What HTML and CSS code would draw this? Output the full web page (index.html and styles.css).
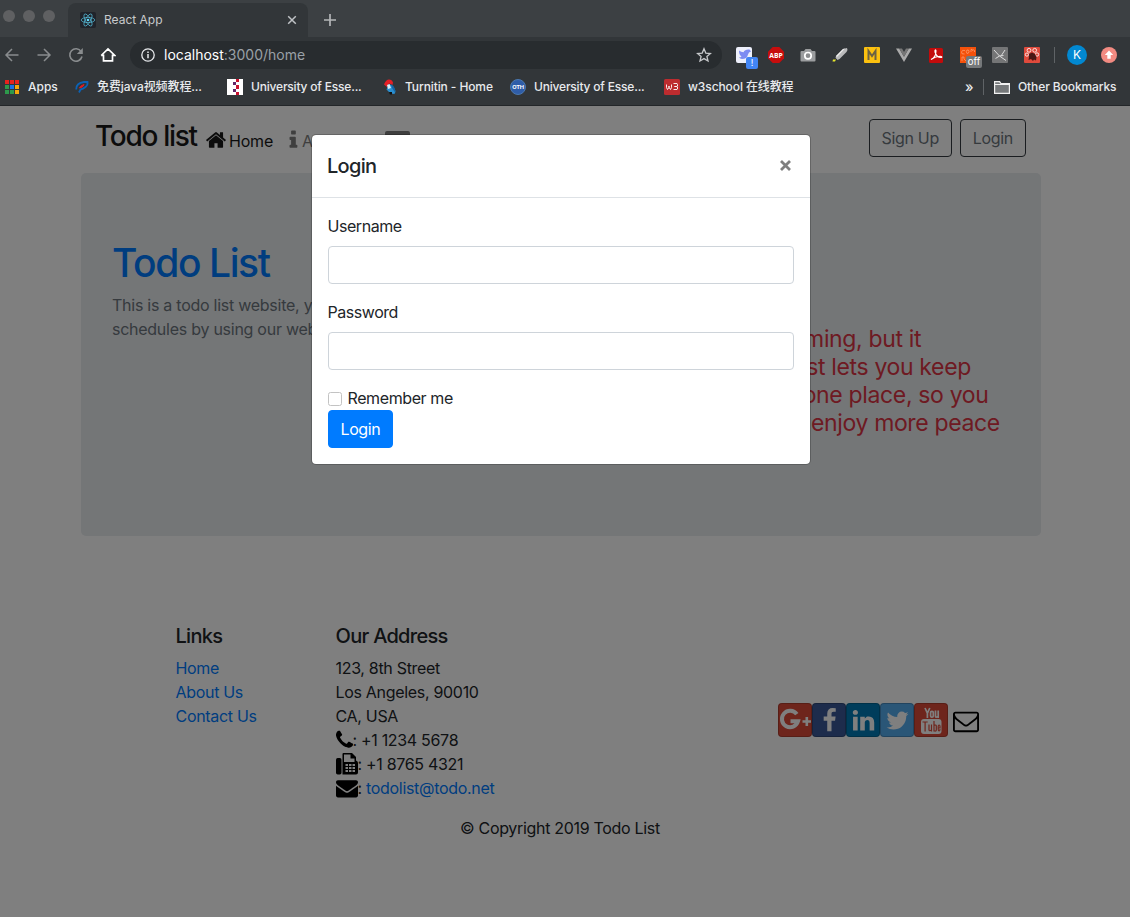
FILE: index.html
```html
<!DOCTYPE html>
<html lang="en">
<head>
<meta charset="utf-8">
<title>React App</title>
<link rel="stylesheet" href="styles.css">
</head>
<body>
<div class="browser">
  <div class="tabstrip">
    <div class="lights"><i></i><i></i><i></i></div>
    <div class="tab">
      <svg class="fav" width="16" height="16" viewBox="0 0 16 16"><rect width="16" height="16" rx="2" fill="#20232a"/><g fill="none" stroke="#61dafb" stroke-width=".7" opacity=".85"><ellipse cx="8" cy="8" rx="6.800" ry="2.600"/><ellipse cx="8" cy="8" rx="6.800" ry="2.600" transform="rotate(60 8 8)"/><ellipse cx="8" cy="8" rx="6.800" ry="2.600" transform="rotate(120 8 8)"/></g><circle cx="8" cy="8" r="1.300" fill="#61dafb"/></svg>
      <span class="tab-title">React App</span>
      <svg class="tab-close" width="10" height="10" viewBox="0 0 10 10"><path d="M1.200 1.200l7.600 7.600M8.800 1.200l-7.600 7.600" stroke="#bfc2c5" stroke-width="1.500"/></svg>
    </div>
    <svg class="newtab" width="12" height="12" viewBox="0 0 12 12"><path d="M6 0v12M0 6h12" stroke="#b4b6b8" stroke-width="1.700"/></svg>
  </div>
  <div class="toolbar">
    <svg class="nav-ico" width="16" height="16" viewBox="0 0 16 16"><path d="M14.500 8H2M8 2L2 8l6 6" fill="none" stroke="#898c8e" stroke-width="1.500"/></svg>
    <svg class="nav-ico" width="16" height="16" viewBox="0 0 16 16"><path d="M1.500 8H14M8 2l6 6-6 6" fill="none" stroke="#898c8e" stroke-width="1.500"/></svg>
    <svg class="nav-ico" width="16" height="16" viewBox="0 0 16 16"><path d="M13.200 4.600A6.200 6.200 0 1 0 14 9.500" fill="none" stroke="#898c8e" stroke-width="1.600"/><path d="M14.800 1v6h-6z" fill="#898c8e"/></svg>
    <svg class="nav-ico" width="16" height="16" viewBox="0 0 16 16"><path d="M3.500 7.500v6.300h9V7.500M1.200 8.500L8 2l6.800 6.500H12.500M1.200 8.500h2.300" fill="none" stroke="#fff" stroke-width="1.700"/></svg>
    <div class="omnibox">
      <svg width="14" height="14" viewBox="0 0 14 14"><circle cx="7" cy="7" r="6.200" fill="none" stroke="#e8eaed" stroke-width="1.300"/><path d="M7 6v4.300M7 3.500v1.500" stroke="#e8eaed" stroke-width="1.500"/></svg>
      <span class="url"><b>localhost</b>:3000/home</span>
      <svg class="star" width="16" height="16" viewBox="0 0 16 16"><path d="M8 1.800l1.800 4.300 4.600.4-3.500 3 1.100 4.500-4-2.400L4 14l1.100-4.500-3.500-3 4.600-.4z" fill="none" stroke="#c6c8ca" stroke-width="1.300"/></svg>
    </div>
    <div class="exts">
      <span class="ext"><svg width="16" height="16" viewBox="0 0 16 16"><rect width="16" height="16" rx="2" fill="#eef0fb"/><path d="M3 3.500q2 1.500 4.500 1.700Q9 2 13.500 2.500L15 4.500q-2.500.5-3 3Q11 12 6 12q-2-.3-3-1.700 2 0 2.500-.9Q3 8 3 3.500z" fill="#7d8cf2"/></svg><em class="badge blue">!</em></span>
      <span class="ext"><svg width="16" height="16" viewBox="0 0 16 16"><path d="M4.700 0h6.600L16 4.700v6.600L11.300 16H4.700L0 11.300V4.700z" fill="#c70d0d"/><text x="8" y="10.800" class="abp" textLength="13.500" lengthAdjust="spacingAndGlyphs">ABP</text></svg></span>
      <span class="ext"><svg width="16" height="16" viewBox="0 0 16 16"><path d="M1.500 4H4l1.500-2h5L12 4h2.500q1 0 1 1v8.500q0 1-1 1h-13q-1 0-1-1V5q0-1 1-1z" fill="#9b9d9f"/><circle cx="8" cy="8.700" r="3.200" fill="#8a8c8e" stroke="#fff" stroke-width="1.700"/></svg></span>
      <span class="ext"><svg width="16" height="16" viewBox="0 0 16 16"><path d="M4 9l7-7 4-1 .5 2-1 2-7 7-2 1-2-2z" fill="#b9babb"/><path d="M4 9l7-7 2-.5L5 10z" fill="#eee"/><path d="M3.500 11L5 13l-2 .5-1-1z" fill="#333"/><path d="M1 12.500h3l-1 2H.500z" fill="#e6e62e"/></svg></span>
      <span class="ext"><svg width="16" height="16" viewBox="0 0 16 16"><rect width="16" height="16" rx="1" fill="#fcc10f"/><path d="M4.500 13V4L8 9l3.500-5v9" fill="none" stroke="#6c6243" stroke-width="2"/></svg></span>
      <span class="ext"><svg width="16" height="16" viewBox="0 0 16 16"><path d="M0 1.500h3.200L8 9.800l4.800-8.300H16L8 15z" fill="#aaa"/><path d="M3.200 1.500H6l2 3.500 2-3.500h2.800L8 9.800z" fill="#777"/></svg></span>
      <span class="ext"><svg width="16" height="16" viewBox="0 0 16 16"><rect x="1" y="1" width="14" height="15" rx="1.500" fill="#c30b0b"/><path d="M3 12.500c3-1.500 5-5 5-8.500 0-2-1.500-1-1 1 .8 3 3 5.500 6 5.500 1.500 0 1-1.500-1.500-1.200-3 .2-5.500 1-8.500 3.200z" fill="none" stroke="#fff" stroke-width="1.100"/></svg></span>
      <span class="ext"><svg width="16" height="16" viewBox="0 0 16 16"><rect width="16" height="16" fill="#f4510b"/><path d="M5 3.500q-3-1-3.500 1.500t3 2M7 3q-1.500 1.500 0 3.500 2 0 2-2T7 3M11 5V2.500q1.500-1 1.500 1 1.800-1.500 2 0V5M2 14v-4q3-1 2 2l2 2" fill="none" stroke="#ffb08a" stroke-width=".6"/></svg><em class="badge gray">off</em></span>
      <span class="ext"><svg width="16" height="16" viewBox="0 0 16 16"><rect width="16" height="16" rx="1" fill="#747576"/><path d="M2 3l5.500 6L14 13.500M13 3l-4 6M3.500 11.500l4-2.500 4-.5" fill="none" stroke="#dcdcdc" stroke-width="1"/></svg></span>
      <span class="ext"><svg width="16" height="16" viewBox="0 0 16 16"><rect width="16" height="16" rx="1" fill="#df4a3c"/><g fill="none" stroke="#fff" stroke-width=".8"><circle cx="5" cy="3.300" r="1.900"/><circle cx="10.700" cy="3.300" r="1.900"/><circle cx="2.900" cy="7.600" r="1.600"/><circle cx="13" cy="7.500" r="1.700"/></g><path d="M5 7l3-1.500L11 7l1.500 3-.5 3.500-2-1L9 14l-2-2-2.500 1 .5-3z" fill="#4a1714"/></svg></span>
    </div>
    <i class="sep s1"></i>
    <span class="avatar">K</span>
    <svg class="upd" width="16" height="16" viewBox="0 0 16 16"><circle cx="8" cy="8" r="8" fill="#f28b82"/><path d="M8 3.600L3.800 8h2.500v3.800h3.400V8h2.500z" fill="#fff"/></svg>
  </div>
  <div class="bookmarks">
    <a class="bm apps"><svg width="14" height="14" viewBox="0 0 14 14"><path d="M0 0h4v4H0zM5 0h4v4H5zM10 0h4v4h-4z" fill="#e8221c"/><path d="M0 5h4v4H0zM0 10h4v4H0z" fill="#2d9a4b"/><path d="M5 5h4v4H5z" fill="#1a73e8"/><path d="M10 5h4v4h-4zM10 10h4v4h-4z" fill="#f4a70b"/><path d="M5 10h4v4H5z" fill="#2d9a4b"/></svg><span>Apps</span></a>
    <a class="bm java"><svg width="14" height="14" viewBox="0 0 14 14"><path d="M1.200 9.500Q1 3 9 2h3.500q.5 3-2 5T5.500 9.500L4 12.500" fill="none" stroke="#0b62b5" stroke-width="1.800"/><path d="M4.500 8q1-2.500 4.500-3.500-.5 2.500-4.500 3.500z" fill="#e31b23" stroke="#e31b23"/></svg><span>免费java视频教程...</span></a>
    <a class="bm essex"><svg width="16" height="16" viewBox="0 0 16 16"><path fill="#fff" d="M0 0h16v16H0z"/><path d="M9 0h3v3H9zM9 6h3v4H9zM9 13h3v3H9z" fill="#c8102e"/><path d="M6 3h3v3H6zM6 10h3v3H6z" fill="#622567"/></svg><span>University of Esse...</span></a>
    <a class="bm turn"><svg width="14" height="16" viewBox="0 0 14 16"><path d="M1 5.500Q3 .5 6 .5T10 3.500L9.500 6 6 4.500 4 8z" fill="#e41f26"/><path d="M6 5l4 2 2.500 5-1 3-4-.5-4-4z" fill="#2a8fd0"/><path d="M8 5q4.500 3 4.500 9L9 9z" fill="#1266a8"/><path d="M4 6l2.500-1 1.500 4-3 1z" fill="#d9ecf7"/><path d="M6 13h3v2.500H7z" fill="#111"/></svg><span>Turnitin - Home</span></a>
    <a class="bm oth"><svg width="16" height="16" viewBox="0 0 16 16"><circle cx="8" cy="8" r="7.500" fill="#2f5da8" stroke="#4b78ae"/><text x="8" y="10" class="otht" textLength="11.500" lengthAdjust="spacingAndGlyphs">OTH</text></svg><span>University of Esse...</span></a>
    <a class="bm w3"><svg width="16" height="16" viewBox="0 0 16 16"><rect width="16" height="16" rx="1.500" fill="#bd2c2f"/><path d="M2.500 5.500v3l1 2 1.500-2v-1.500 1.500l1.500 2 1-2v-3M9.500 4.500h3.500l.5 1v1.500l-1 .5h-2 2l1 .5v2l-.5.500H9.500" fill="none" stroke="#fff" stroke-width=".9"/></svg><span>w3school 在线教程</span></a>
    <span class="more">»</span>
    <i class="sep"></i>
    <a class="bm other"><svg width="16" height="13" viewBox="0 0 16 13"><path d="M.6 12.400V.6h5l1.400 2h8.400v9.800z" fill="#75787a" stroke="#f1f1f1" stroke-width="1.200"/><path d="M1 3.500h14" stroke="#f1f1f1"/></svg><span>Other Bookmarks</span></a>
  </div>
</div>

<div class="viewport">
  <div class="page">
    <nav class="navbar">
      <span class="brand">Todo list</span>
      <a class="nl on"><svg width="22" height="22" viewBox="0 0 1792 1792"><path d="M1472 992v480q0 26-19 45t-45 19h-384v-384h-256v384h-384q-26 0-45-19t-19-45v-480q0-1 .5-3t.5-3l575-474 575 474q1 2 1 6zm223-69l-62 74q-8 9-21 11h-3q-13 0-21-7l-692-577-692 577q-12 8-24 7-13-2-21-11l-62-74q-8-10-7-23.500t11-21.500l719-599q32-26 76-26t76 26l244 204v-195q0-14 9-23t23-9h192q14 0 23 9t9 23v408l219 182q10 8 11 21.500t-7 23.500z"/></svg><span>Home</span></a>
      <a class="nl info"><svg width="9" height="22" viewBox="540 0 720 1792"><path d="M1216 1344v128q0 26-19 45t-45 19h-512q-26 0-45-19t-19-45v-128q0-26 19-45t45-19h64v-384h-64q-26 0-45-19t-19-45v-128q0-26 19-45t45-19h384q26 0 45 19t19 45v576h64q26 0 45 19t19 45zm-128-1152v192q0 26-19 45t-45 19h-256q-26 0-45-19t-19-45v-192q0-26 19-45t45-19h256q26 0 45 19t19 45z"/></svg><span>About Us</span></a>
      <a class="nl card"><svg width="25" height="18" viewBox="0 0 25 18"><path d="M2 0h21q2 0 2 2v14q0 2-2 2H2q-2 0-2-2V2q0-2 2-2z"/><circle cx="8" cy="7" r="3" fill="#fff"/></svg><span>Contact Us</span></a>
      <div class="auth"><button class="ob">Sign Up</button><button class="ob">Login</button></div>
    </nav>
    <section class="jumbo">
      <div class="intro"><h1>Todo List</h1><p>This is a todo list website, you can manage your<br>schedules by using our website</p></div>
      <p class="pitch">Life can feel overwhelming, but it<br>doesn't have to. Todoist lets you keep<br>track of everything in one place, so you<br>can get it all done and enjoy more peace<br>of mind along the way.</p>
    </section>
    <footer class="foot">
      <div class="cols">
        <div class="links"><h5>Links</h5><a>Home</a><a>About Us</a><a>Contact Us</a></div>
        <address>
          <h5>Our Address</h5>
          <div>123, 8th Street</div><div>Los Angeles, 90010</div><div>CA, USA</div>
          <div class="row"><svg width="17" height="22" viewBox="192 0 1408 1792"><path d="M1600 1240q0 27-10 70.500t-21 68.500q-21 50-122 106-94 51-186 51-27 0-52.500-3.500t-57.500-12.500-47.500-14.500-55.500-20.500-49-18q-98-35-175-83-128-79-264.500-215.500t-215.500-264.500q-48-77-83-175-3-9-18-49t-20.500-55.500-14.500-47.500-12.500-57.500-3.500-52.500q0-92 51-186 56-101 106-122 25-11 68.500-21t70.500-10q14 0 21 3 18 6 53 76 11 19 30 54t35 63.500 31 53.500q3 4 17.500 25t21.500 35.500 7 28.500q0 20-28.500 50t-62 55-62 53-28.500 46q0 9 5 22.500t8.500 20.500 14 24 11.500 19q76 137 174 235t235 174q2 1 19 11.500t24 14 20.500 8.500 22.500 5q18 0 46-28.500t53-62 55-62 50-28.500q14 0 28.500 7t35.500 21.500 25 17.500q25 15 53.500 31t63.500 35 54 30q70 35 76 53 3 7 3 21z"/></svg><span>: +1 1234 5678</span></div>
          <div class="row"><svg width="22" height="22" viewBox="0 0 22 22"><rect x="0" y="5" width="5.500" height="16.500" rx="1.700"/><path fill-rule="evenodd" d="M6.500 1q0-1 1-1h8.500L20 4v3.500q2 .5 2 2.500v9.500q0 2-2 2H6.500zM8 1.500V9h10.500V5.500h-4v-4zM9.500 11v2H12v-2zm3.500 0v2h2.500v-2zm3.500 0v2H19v-2zm-7 3v2H12v-2zm3.500 0v2h2.500v-2zm3.500 0v2H19v-2zm-7 3v2H12v-2zm3.500 0v2h2.500v-2zm3.500 0v2H19v-2z"/></svg><span>: +1 8765 4321</span></div>
          <div class="row"><svg width="22" height="22" viewBox="0 0 1792 1792"><path d="M1792 710v794q0 66-47 113t-113 47h-1472q-66 0-113-47t-47-113v-794q44 49 101 87 362 246 497 345 57 42 92.500 65.500t94.500 48 110 24.500h2q51 0 110-24.500t94.500-48 92.500-65.500q170-123 498-345 57-39 100-87zm0-294q0 79-49 151t-122 123q-376 261-468 325-10 7-42.500 31t-54 38.500-52 32.500-57.500 27-50 9h-2q-23 0-50-9t-57.500-27-52-32.500-54-38.500-42.500-31q-91-64-262-182.500t-205-142.500q-62-42-117-115.500t-55-136.500q0-78 41.500-130t118.500-52h1472q65 0 112.500 47t47.500 113z"/></svg><span>: <a>todolist@todo.net</a></span></div>
        </address>
        <div class="social">
          <a class="sb g"><svg width="34" height="34" viewBox="0 0 34 34"><path d="M18.800 11.200A8.200 8.200 0 1 0 20 18.300H12.500" fill="none" stroke="#fff" stroke-width="4"/><path d="M28.800 14v9M24.500 18.500h8.500" stroke="#fff" stroke-width="2.600"/></svg></a>
          <a class="sb f"><svg width="25" height="25" viewBox="0 0 1792 1792"><path d="M1343 12v264h-157q-86 0-116 36t-30 108v189h293l-39 296h-254v759h-306v-759h-255v-296h255v-218q0-186 104-288.500t277-102.500q147 0 228 12z"/></svg></a>
          <a class="sb l"><svg width="25" height="25" viewBox="0 0 1792 1792"><path d="M477 625v991h-330v-991h330zm21-306q1 73-50.500 122t-135.500 49h-2q-82 0-132-49t-50-122q0-74 51.500-122.500t134.500-48.500 133 48.500 51 122.500zm1166 729v568h-329v-530q0-105-40.500-164.500t-126.500-59.500q-63 0-105.500 34.500t-63.500 85.500q-11 30-11 81v553h-329q2-399 2-647t-1-296l-1-48h329v144h-2q20-32 41-56t56.500-52 87-43.500 114.500-15.500q171 0 275 113.500t104 332.500z"/></svg></a>
          <a class="sb t"><svg width="25" height="25" viewBox="0 0 1792 1792"><path d="M1684 408q-67 98-162 167 1 14 1 42 0 130-38 259.500t-115.500 248.500-184.500 210.500-258 146-323 54.500q-271 0-496-145 35 4 78 4 225 0 401-138-105-2-188-64.500t-114-159.500q33 5 61 5 43 0 85-11-112-23-185.500-111.500t-73.500-205.500v-4q68 38 146 41-66-44-105-115t-39-154q0-88 44-163 121 149 294.500 238.500t371.500 99.500q-8-38-8-74 0-134 94.500-228.500t228.500-94.500q140 0 236 102 109-21 205-78-37 115-142 178 93-10 186-50z"/></svg></a>
          <a class="sb y"><svg width="34" height="34" viewBox="0 0 34 34"><g fill="none" stroke="#fff" stroke-width="1.700"><path d="M11 5l2.400 5.200L15.800 5M13.400 9.500v5.500"/><rect x="16.600" y="8.300" width="2.700" height="5.900" rx="1.300"/><path d="M21.500 7.500v6q.3 1.400 2.500 0M24.200 7.500V15"/></g><rect x="7" y="16" width="20.500" height="15" rx="3"/><g fill="none" stroke="#dd4b39" stroke-width="1.200"><path d="M8.500 19h5.200M11.100 19v9.500M15 21.500v5.600q.5 1.300 2.300 0M17.500 21.500v7M20 18v10.500M20 22.500q2.300-1.200 2.300.6v4q-.3 1.500-2.300.6M26 26q0 2-.9 2t-.9-2v-2.500q0-1.500.9-1.500t.9 1.500v1.500h-1.800"/></g></svg></a>
          <svg class="mail" width="26" height="26" viewBox="0 0 1792 1792"><path d="M1664 1504v-768q-32 36-69 66-268 206-426 338-51 43-83 67t-86.500 48.500-102.500 24.500h-2q-48 0-102.500-24.500t-86.500-48.500-83-67q-158-132-426-338-37-30-69-66v768q0 13 9.500 22.500t22.500 9.500h1472q13 0 22.500-9.500t9.500-22.500zm0-1051v-24.500l-.5-13-3-12.500-5.500-9-9-7.500-14-2.500h-1472q-13 0-22.500 9.500t-9.500 22.500q0 168 147 284 193 152 401 317 6 5 35 29.500t46 37.500 44.500 31.500 50.500 27.500 43 9h2q20 0 43-9t50.500-27.500 44.500-31.500 46-37.500 35-29.500q208-165 401-317 54-43 100.500-115.500t46.500-131.500zm128-37v1088q0 66-47 113t-113 47h-1472q-66 0-113-47t-47-113v-1088q0-66 47-113t113-47h1472q66 0 113 47t47 113z"/></svg>
        </div>
      </div>
      <p class="copy">© Copyright 2019 Todo List</p>
    </footer>
  </div>
  <div class="backdrop">
    <div class="modal">
      <header><h5>Login</h5><svg width="13" height="13" viewBox="0 0 13 13"><path d="M2 2l9 9M11 2l-9 9" stroke="#7f7f7f" stroke-width="2.800"/></svg></header>
      <form>
        <label>Username</label><input type="text">
        <label>Password</label><input type="password">
        <div class="remember"><i class="check"></i><span>Remember me</span></div>
        <button type="button" class="primary">Login</button>
      </form>
    </div>
  </div>
</div>
</body>
</html>
```
FILE: styles.css
```css
* { box-sizing: border-box; }
body { margin: 0; width: 1130px; height: 917px; overflow: hidden; font: 16px/24px Inter, "Noto Sans CJK SC", sans-serif; letter-spacing: -.31px; color: #212529; background: #fff; }
svg { display: block; flex: none; }
h1, h5, p { margin: 0; font-weight: 500; }
a { text-decoration: none; }

/* browser chrome */
.browser { height: 106px; background: #323639; color: #e8eaed; border-bottom: 1px solid #232629; letter-spacing: 0; }
.tabstrip { height: 37px; background: #3c4043; display: flex; align-items: flex-end; }
.lights { display: flex; gap: 8px; padding-left: 3px; width: 68px; align-self: flex-start; margin-top: 10px; }
.lights i { width: 12px; height: 12px; border-radius: 50%; background: #5f6062; }
.tab { width: 240px; height: 34px; background: #323639; border-radius: 8px 8px 0 0; display: flex; align-items: center; padding: 0 11px 0 12px; }
.tab-title { margin-left: 8px; font-size: 12px; color: #c8cacc; flex: 1; }
.newtab { margin: 0 0 11px 16px; }
.toolbar { height: 36px; display: flex; align-items: center; padding-left: 4px; }
.nav-ico { margin-right: 16px; }
.omnibox { width: 592px; height: 28px; margin-left: -2px; border-radius: 14px; background: #282c2f; display: flex; align-items: center; padding: 0 10px 0 11px; }
.url { margin-left: 9px; font-size: 14px; color: #9aa0a6; flex: 1; }
.url b { font-weight: 400; color: #fff; }
.exts { display: flex; gap: 16px; margin-left: 14px; }
.ext { width: 16px; height: 16px; position: relative; }
.badge { position: absolute; font-style: normal; color: #fff; text-align: center; border-radius: 2px; }
.blue { left: 10px; top: 10px; width: 12px; height: 12px; background: #4285f4; font-size: 9px; line-height: 12px; }
.gray { left: 6px; top: 9px; width: 16px; height: 12px; background: #75787a; font-size: 9.500px; line-height: 12px; }
.abp { font: 700 7.500px "Open Sans", sans-serif; fill: #fff; text-anchor: middle; }
.sep { width: 1px; height: 16px; background: #5f6366; flex: none; }
.s1 { margin-left: 14px; }
.avatar { width: 20px; height: 20px; margin-left: 12px; border-radius: 50%; background: #0288d1; color: #fff; font-size: 12px; line-height: 20px; text-align: center; }
.upd { margin-left: 14px; }
.bookmarks { height: 28px; display: flex; align-items: center; padding-left: 5px; font-size: 12px; line-height: 16px; font-weight: 500; }
.bm { display: flex; align-items: center; gap: 8px; white-space: nowrap; letter-spacing: -.1px; }
.apps { width: 70px; gap: 9px; letter-spacing: 0; }
.java { width: 152px; }
.essex { width: 156px; }
.oth { width: 154px; }
.essex, .oth { letter-spacing: -.19px; }
.turn { width: 127px; }
.w3 { width: 301px; }
.more { width: 18px; font-size: 14px; }
.other { margin-left: 10px; }
.otht { font: 700 5px Inter, sans-serif; fill: #fff; text-anchor: middle; }

/* page content */
.viewport { position: relative; height: 811px; }
.page { width: 960px; margin-left: 81px; }
.navbar { height: 67px; padding: 5px 15px 0; display: flex; align-items: center; }
.brand { font-size: 28px; font-weight: 500; letter-spacing: -1.300px; width: 110px; margin-left: -1px; color: #191919; white-space: nowrap; margin-top: -12px; }
.nl { display: flex; align-items: center; gap: 4px; color: #7f7f7f; fill: #7f7f7f; margin-top: -4px; white-space: nowrap; }
.nl span { margin-top: 1px; }
.on { color: #191919; fill: #191919; width: 84px; gap: 2px; letter-spacing: -.2px; }
.info { width: 96px; }
.card { width: 120px; }
.auth { margin: -8px 0 0 auto; display: flex; gap: 8px; }
.ob { height: 38px; padding: 0 12px; border: 1px solid #343a40; border-radius: 4px; background: none; font: inherit; letter-spacing: -.33px; color: #6c757d; }
.jumbo { height: 363px; border-radius: 5px; background: #e9ecef; padding: 64px 32px 0 31px; display: flex; justify-content: space-between; }
.intro { white-space: nowrap; color: #6c757d; }
.intro h1 { font-size: 39px; line-height: 48px; margin-bottom: 6px; letter-spacing: -1.400px; color: #007bff; margin-top: 2px; }
.intro p { font-weight: 400; letter-spacing: -.26px; }
.pitch { width: 380px; margin: 88px 56px 0 0; font-size: 23px; line-height: 28px; font-weight: 400; letter-spacing: -.35px; color: #dc3545; white-space: nowrap; }
.foot { padding: 88px 0 0 94.500px; }
.foot h5, .modal h5 { font-size: 20px; line-height: 24px; letter-spacing: -.7px; }
.foot h5 { margin-bottom: 8px; }
.cols { display: flex; }
.links { width: 160px; }
.links a { display: block; }
.foot a { color: #007bff; }
address { font-style: normal; width: 442.500px; }
.row { display: flex; align-items: center; height: 24px; }
.social { display: flex; height: 34px; margin-top: 79px; }
.sb { width: 34px; height: 34px; border-radius: 4px; display: flex; align-items: center; justify-content: center; fill: #fff; box-shadow: inset 0 0 0 1px rgba(0,0,0,.2); }
.g { background: #dd4b39; }
.f { background: #3b5998; }
.l { background: #007bb6; }
.t { background: #55acee; }
.y { background: #dd4b39; }
.mail { margin: 5px 0 0 5px; }
.copy { margin: 16px 0 0 284.500px; font-weight: 400; }

/* dialog */
.backdrop { position: absolute; inset: 0; background: rgba(0,0,0,.5); padding: 28px 0 0 311px; }
.modal { width: 500px; height: 331px; background: #fff; background-clip: padding-box; border: 1px solid rgba(0,0,0,.2); border-radius: 5px; }
.modal header { height: 63px; border-bottom: 1px solid #dee2e6; padding: 0 18px 1px 15px; display: flex; justify-content: space-between; align-items: center; }
.modal h5 { margin-top: 1px; }
form { padding: 16px; }
label { display: block; margin: 0 0 8px -.5px; letter-spacing: -.45px; }
input { display: block; width: 100%; height: 38px; border: 1px solid #ced4da; border-radius: 4px; margin-bottom: 16px; }
.remember { display: flex; align-items: center; height: 24px; gap: 5.500px; letter-spacing: -.4px; }
.check { width: 14px; height: 14px; border: 1px solid #c3c3c3; border-radius: 2.500px; background: #fff; margin-top: 1px; }
.primary { display: block; height: 38px; padding: 0 11.500px; border: 1px solid #007bff; border-radius: 4px; background: #007bff; color: #fff; font: inherit; letter-spacing: -.4px; }
```
